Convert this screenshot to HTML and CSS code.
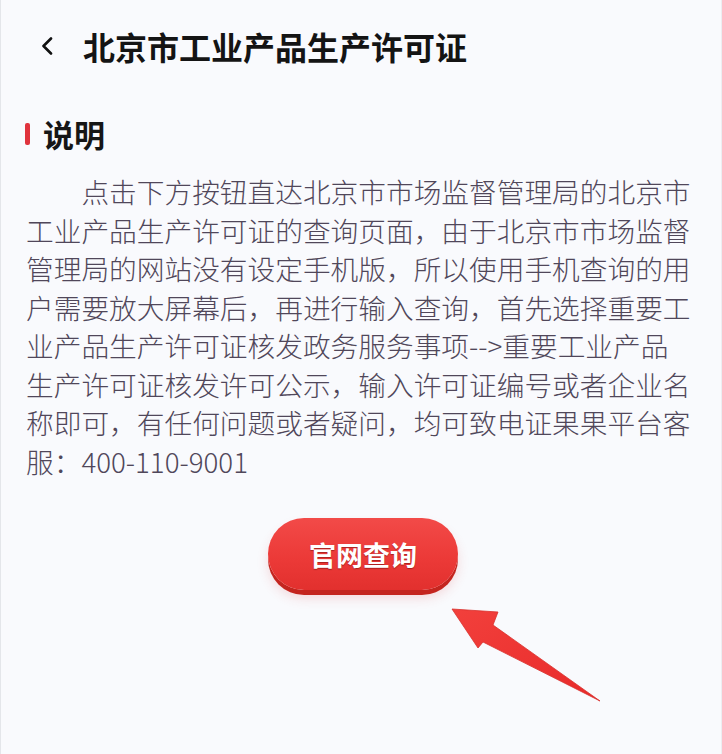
FILE: index.html
```html
<!DOCTYPE html>
<html lang="zh-CN">
<head>
<meta charset="utf-8">
<title>北京市工业产品生产许可证</title>
<link rel="stylesheet" href="styles.css">
</head>
<body>
<div class="page">
  <header class="header">
    <svg class="back" width="12" height="18" viewBox="0 0 12 18"><polyline points="10,1.5 2.5,9 10,16.5" fill="none" stroke="#111" stroke-width="2.6" stroke-linecap="round" stroke-linejoin="round"/></svg>
    <h1 class="title">北京市工业产品生产许可证</h1>
  </header>
  <section class="section">
    <h2 class="section-title"><span class="bar"></span><span>说明</span></h2>
    <p class="desc">点击下方按钮直达北京市市场监督管理局的北京市工业产品生产许可证的查询页面，由于北京市市场监督管理局的网站没有设定手机版，所以使用手机查询的用户需要放大屏幕后，再进行输入查询，首先选择重要工业产品生产许可证核发政务服务事项--&gt;重要工业产品生产许可证核发许可公示，输入许可证编号或者企业名称即可，有任何问题或者疑问，均可致电证果果平台客服：400-110-9001</p>
    <div class="actions">
      <button class="btn" type="button">官网查询</button>
    </div>
    <svg class="arrow" width="160" height="105" viewBox="0 0 160 105">
      <defs>
        <linearGradient id="ag" x1="0" y1="0" x2="1" y2="1">
          <stop offset="0" stop-color="#f2403c"/>
          <stop offset="1" stop-color="#e82a2a"/>
        </linearGradient>
      </defs>
      <polygon points="7,9 53,12 48,25 155,101 38,42 33,48" fill="url(#ag)" stroke="#d8302c" stroke-width="0.8" stroke-linejoin="round"/>
    </svg>
  </section>
</div>
</body>
</html>
```

FILE: styles.css
```css
* { box-sizing: border-box; }
html, body { margin: 0; padding: 0; }
body {
  background: #f8f9fc;
  font-family: "Noto Sans CJK SC", "Noto Sans", sans-serif;
}
.page {
  width: 722px;
  min-height: 754px;
  border-left: 1px solid #e4e6ea;
  border-right: 1px solid #eceef2;
  background: #f9fafd;
}
.header {
  height: 92px;
  display: flex;
  align-items: center;
  padding-left: 40px;
}
.back { display: block; flex: none; }
.title {
  margin: 0 0 0 30px;
  font-size: 32px;
  line-height: 1;
  font-weight: 700;
  color: #141414;
  letter-spacing: 0;
}
.section { padding: 0 0 0 24px; }
.section-title {
  margin: 24px 0 0;
  height: 36px;
  display: flex;
  align-items: center;
  font-size: 31px;
  line-height: 36px;
  font-weight: 700;
  color: #161616;
}
.bar {
  width: 5px;
  height: 22px;
  border-radius: 2px;
  background: #e0333d;
  margin-right: 13px;
}
.desc {
  margin: 20px 0 0;
  width: 668px;
  padding-left: 1px;
  font-size: 27.7px;
  line-height: 38.5px;
  text-indent: 2em;
  color: #50475a;
  font-weight: 300;
  text-align: left;
}
.actions {
  display: flex;
  justify-content: center;
  margin-top: 38px;
  padding-right: 24px;
}
.btn {
  width: 190px;
  height: 72px;
  border: none;
  border-radius: 36px;
  background: linear-gradient(180deg, #f24a48 0%, #ec3a38 55%, #e2302e 100%);
  box-shadow: 0 5px 0 #c4251f, 0 8px 12px rgba(220, 60, 60, 0.18);
  color: #fff;
  font-family: "Noto Sans CJK SC", sans-serif;
  font-size: 27px;
  font-weight: 700;
  letter-spacing: 0;
  text-shadow: 0 1px 1px rgba(90, 0, 0, 0.45);
  padding: 0;
  margin-left: 4px;
}
.arrow {
  display: block;
  margin: 10px 0 0 420px;
}
```
